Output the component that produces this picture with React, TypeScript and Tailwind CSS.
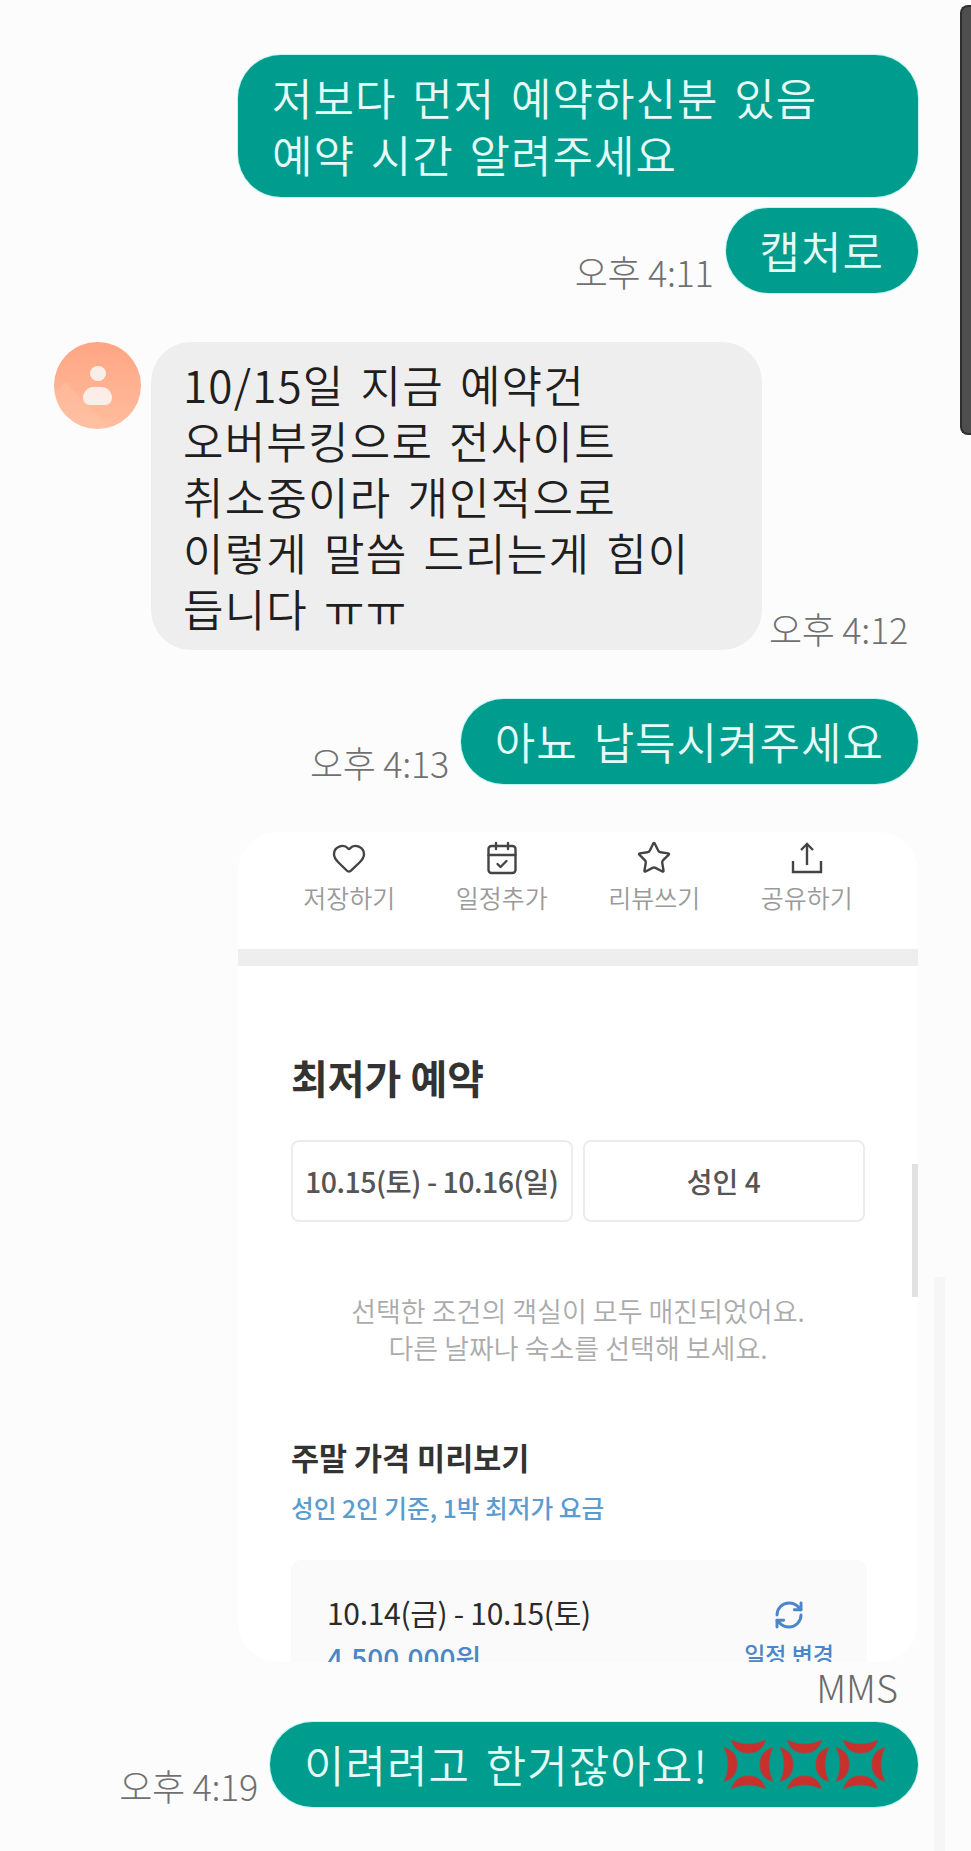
import { CalendarCheck, Heart, RefreshCw, Star } from "lucide-react";

const KR = "font-['Noto_Sans_CJK_KR','Noto_Sans',sans-serif]";

function Time({ label }: { label: string }) {
  return <span className="whitespace-nowrap pb-[2px] text-[36px] leading-[40px] font-light tracking-[-0.3px] text-[#707070]">{label}</span>;
}

function Sent({ children, className }: { children: React.ReactNode; className?: string }) {
  return (
    <div
      className={`rounded-[43px] bg-[#009d8e] px-[34px] py-[14px] text-[44px] leading-[57px] font-[350] tracking-[1px] whitespace-nowrap text-[#e6fbf6] [word-spacing:5px] shadow-[0_0_0_1px_#c4f6f0] ${className ?? ""}`}
    >
      {children}
    </div>
  );
}

function AngerMark() {
  return (
    <svg viewBox="0 0 50 50" className="h-[51px] w-[51px] shrink-0">
      <g fill="#c8302e" stroke="#7d5a50" strokeWidth="0.7">
        <path d="M8 1 Q25 9 42 1 Q38 14 25 14 Q12 14 8 1 Z" />
        <path d="M8 49 Q25 41 42 49 Q38 36 25 36 Q12 36 8 49 Z" />
        <path d="M1 8 Q9 25 1 42 Q14 38 14 25 Q14 12 1 8 Z" />
        <path d="M49 8 Q41 25 49 42 Q36 38 36 25 Q36 12 49 8 Z" />
      </g>
    </svg>
  );
}

function ShareIcon({ className }: { size?: number; strokeWidth?: number; className?: string }) {
  return (
    <svg viewBox="0 0 36 36" className={`h-[36px] w-[36px] ${className ?? ""}`} fill="none" stroke="currentColor" strokeWidth="2.4">
      <path d="M4 21 V32 H32 V21" />
      <path d="M18 25 V4" />
      <path d="M12 10 L18 4 L24 10" />
    </svg>
  );
}

function Avatar() {
  return (
    <div className="relative flex h-[87px] w-[87px] shrink-0 flex-col items-center justify-center gap-[6px] overflow-hidden rounded-full bg-gradient-to-b from-[#ffa583] to-[#ffbd9e]">
      <div className="absolute bottom-[-62px] left-[-34px] h-[90px] w-[90px] rotate-45 bg-[#ffc9ae]/30" />
      <div className="relative h-[15px] w-[16px] rounded-full bg-[#fbeee8]" />
      <div className="relative h-[18px] w-[29px] rounded-t-[14px] rounded-b-[9px] bg-[#fbeee8]" />
    </div>
  );
}

const actions = [
  { label: "저장하기", icon: Heart },
  { label: "일정추가", icon: CalendarCheck },
  { label: "리뷰쓰기", icon: Star },
  { label: "공유하기", icon: ShareIcon },
];

function BookingCard() {
  return (
    <div className="relative h-[830px] w-[680px] overflow-hidden rounded-[40px] bg-white">
      <div className="grid grid-cols-4 px-[35px] pt-[8px]">
        {actions.map(({ label, icon: Icon }) => (
          <div key={label} className="flex flex-col items-center">
            <Icon size={36} strokeWidth={1.6} className="text-[#444444]" />
            <span className="mt-[4px] text-[25px] leading-[34px] font-[350] text-[#9a9a9a]">{label}</span>
          </div>
        ))}
      </div>
      <div className="mt-[35px] h-[17px] bg-[#eeeeee]" />

      <div className="px-[53px]">
        <h2 className="mt-[86px] text-[40px] leading-[50px] font-bold text-[#333333]">최저가 예약</h2>
        <div className="mt-[38px] flex gap-[10px]">
          <div className="flex h-[82px] w-[283px] items-center justify-center rounded-[8px] border-2 border-[#ececec] text-[28.5px] font-medium tracking-[-0.5px] whitespace-nowrap text-[#555555]">
            10.15(토) - 10.16(일)
          </div>
          <div className="flex h-[82px] w-[284px] items-center justify-center rounded-[8px] border-2 border-[#ececec] text-[28px] font-medium text-[#555555]">
            성인 4
          </div>
        </div>
        <p className="mt-[70px] text-center text-[27px] leading-[37px] font-[350] whitespace-nowrap text-[#ababab]">
          선택한 조건의 객실이 모두 매진되었어요.
          <br />
          다른 날짜나 숙소를 선택해 보세요.
        </p>
        <h3 className="mt-[71px] text-[30.5px] leading-[40px] font-bold text-[#333333]">주말 가격 미리보기</h3>
        <p className="mt-[12px] text-[24.7px] leading-[36px] font-medium text-[#5a9bd0]">성인 2인 기준, 1박 최저가 요금</p>

        <div className="mt-[35px] flex h-[130px] w-[576px] justify-between rounded-[10px] bg-[#fafafa] pt-[32px] pr-[33px] pl-[36px]">
          <div>
            <div className="text-[30px] leading-[40px] font-normal tracking-[-0.3px] whitespace-nowrap text-[#2b2b2b]">10.14(금) - 10.15(토)</div>
            <div className="mt-[7px] text-[28px] leading-[38px] font-medium text-[#4a86c8]">4,500,000원</div>
          </div>
          <div className="flex flex-col items-center pt-[7px]">
            <RefreshCw size={32} strokeWidth={2.2} className="text-[#4a86c8]" />
            <span className="mt-[8px] text-[23px] leading-[30px] font-medium whitespace-nowrap text-[#4a86c8]">일정 변경</span>
          </div>
        </div>
      </div>

      {/* inner scroll thumb */}
      <div className="absolute top-[332px] right-0 h-[133px] w-[6px] bg-[#e2e2e2]" />
    </div>
  );
}

export default function App() {
  return (
    <div className={`relative h-[1851px] w-[971px] overflow-hidden bg-[#fcfcfc] pt-[55px] pr-[53px] ${KR}`}>
      {/* page scrollbar + side strip */}
      <div className="absolute top-[5px] right-0 h-[430px] w-[11px] rounded-l-[8px] border-2 border-r-0 border-[#2e2e2e] bg-[#4e4e4e]" />
      <div className="absolute top-[1277px] right-[26px] bottom-0 w-[11px] bg-[#f6f6f6]" />

      <div className="relative flex flex-col items-end">
        <Sent className="w-[680px]">
          저보다 먼저 예약하신분 있음
          <br />
          예약 시간 알려주세요
        </Sent>

        <div className="mt-[11px] flex items-end gap-[12px]">
          <Time label="오후 4:11" />
          <Sent>캡처로</Sent>
        </div>

        <div className="mt-[49px] flex w-full items-start gap-[4px] pl-[54px] pr-0">
          <Avatar />
          <div className="ml-[6px] flex items-end gap-[7px]">
            <div className="w-[611px] rounded-[40px] bg-[#eeeeee] px-[32px] py-[14px] text-[44px] leading-[56px] font-[350] tracking-[1.2px] whitespace-nowrap text-[#1f1f1f] [word-spacing:5px]">
              10/15일 지금 예약건
              <br />
              오버부킹으로 전사이트
              <br />
              취소중이라 개인적으로
              <br />
              이렇게 말씀 드리는게 힘이
              <br />
              듭니다 ㅠㅠ
            </div>
            <Time label="오후 4:12" />
          </div>
        </div>

        <div className="mt-[49px] flex items-end gap-[12px]">
          <Time label="오후 4:13" />
          <Sent>아뇨 납득시켜주세요</Sent>
        </div>

        <div className="mt-[48px]">
          <BookingCard />
        </div>

        <div className="mt-[5px] pr-[20px] text-[38px] leading-[40px] font-light text-[#6a6a6a]">MMS</div>

        <div className="mt-[15px] flex items-end gap-[12px]">
          <Time label="오후 4:19" />
          <Sent className="flex items-center gap-[15px] pr-[32px]">
            <span>이려려고 한거잖아요!</span>
            <span className="flex gap-[5px]">
              <AngerMark />
              <AngerMark />
              <AngerMark />
            </span>
          </Sent>
        </div>
      </div>
    </div>
  );
}
